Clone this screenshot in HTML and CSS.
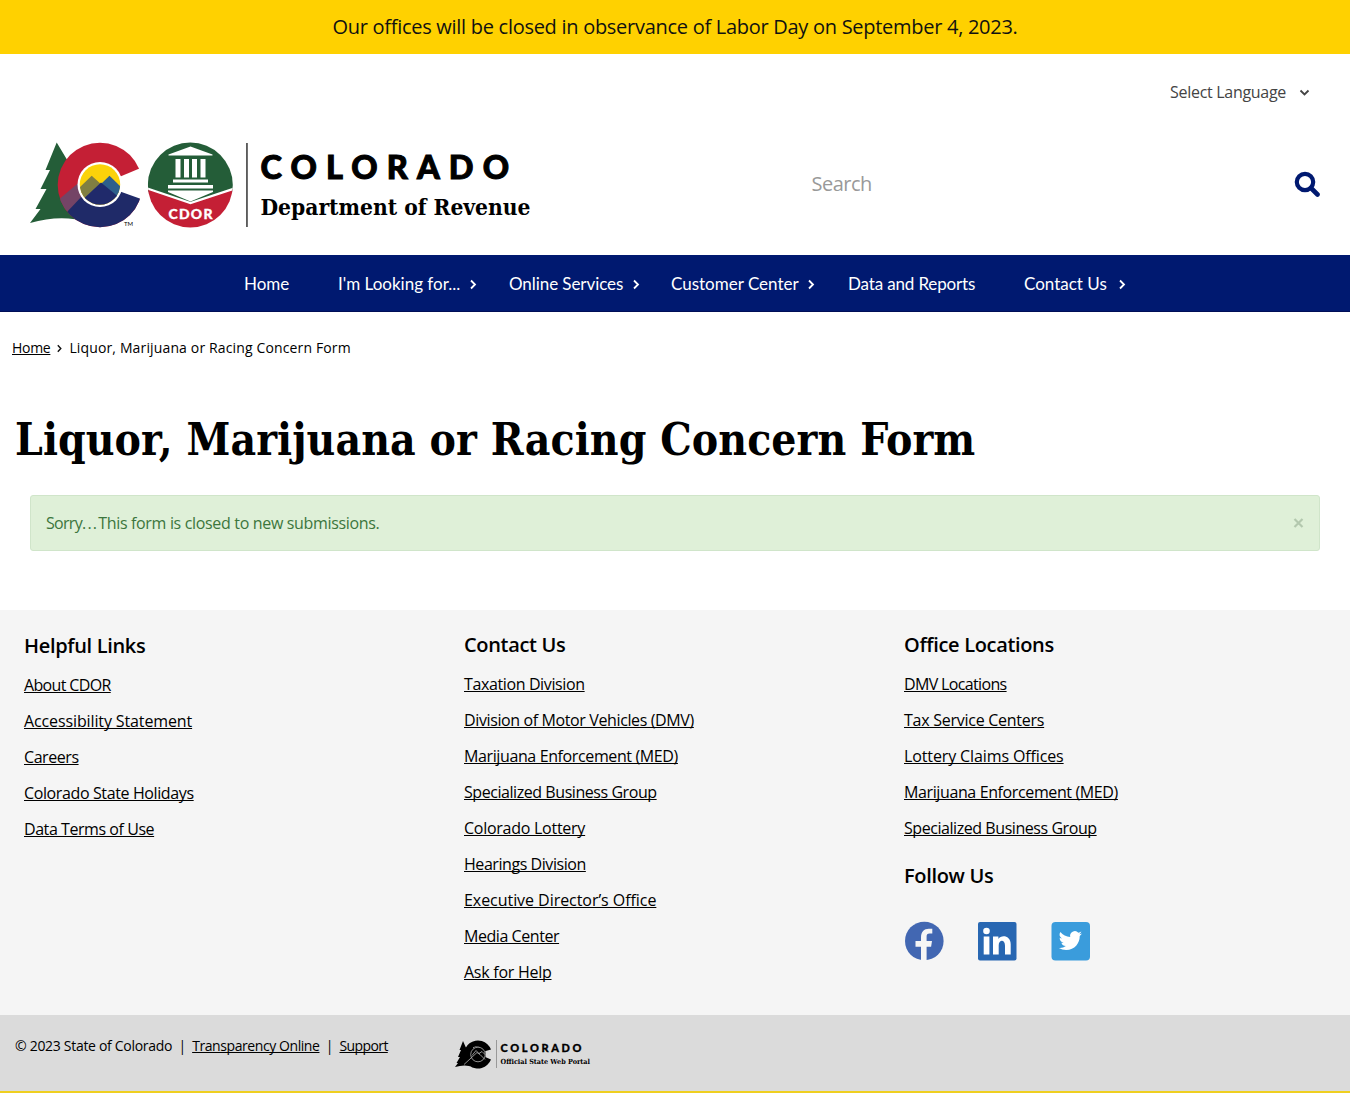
FILE: index.html
```html
<!DOCTYPE html>
<html lang="en">
<head>
<meta charset="utf-8">
<title>Liquor, Marijuana or Racing Concern Form | Department of Revenue</title>
<link rel="stylesheet" href="styles.css">
</head>
<body>
<div class="notice">Our offices will be closed in observance of Labor Day on September 4, 2023.</div>
<header class="header">
  <div class="language"><span>Select Language</span>
    <svg class="caret" width="11" height="8" viewBox="0 0 11 8"><path d="M1.5 1.5 5.5 5.5 9.5 1.5" fill="none" stroke="#444" stroke-width="1.8"/></svg>
  </div>
  <div class="brand-row">
    <svg class="logo" width="502" height="86" viewBox="0 0 502 86" role="img" aria-label="Colorado Department of Revenue">
      <defs><clipPath id="disc"><circle cx="70" cy="43" r="42.300"/></clipPath><clipPath id="sun"><circle cx="70" cy="42.500" r="20.200"/></clipPath><clipPath id="seal"><circle cx="160.300" cy="43" r="42.500"/></clipPath></defs>
      <path fill="#245d38" d="M26.700.5 15.500 28h4.500L10.500 47h6L5.500 67h5L0 81Q31 72 58 80L50 20 42 26Z"/>
      <g clip-path="url(#disc)">
        <path fill="#c41f35" d="M25 0h90v90H25z"/>
        <path fill="#744466" d="M27 59 48.300 41 56 50 40 72Z"/>
        <path fill="#1f2a68" d="M37 70 54 52 91 48l30 12v30H30Z"/>
      </g>
      <path fill="#fff" d="m88 35.500 28-11.800v35L88 48.700Z"/>
      <circle cx="70" cy="42.500" r="22.500" fill="#fff"/>
      <g clip-path="url(#sun)">
        <path fill="#fbd20a" d="M45 20h50v45H45z"/>
        <path fill="#807f42" d="M44 51 61.700 33.700 72 43 54 64Z"/>
        <path fill="#2e5f8b" d="M71 42 79.500 33.700 98 52v15Z"/>
        <path fill="#202a6b" d="M48 62 71 40.500 96 61v9H48Z"/>
      </g>
      <text x="94" y="84" class="logo-tm" textLength="9">TM</text>
      <g clip-path="url(#seal)"><path fill="#245d38" d="M117 0h87v50l-43 13-43-13Z"/><path fill="#c41f35" d="m116 46 44.500 15L206 46v41h-90Z"/><path d="m116 46 44.500 15L206 46" fill="none" stroke="#fff" stroke-width="2.200"/></g>
      <path fill="#fff" d="m160.500 4.500 22 8v1h-44v-1ZM145.500 17h5v18.500h-5zM154 17h5v18.500h-5zM162 17h5v18.500h-5zM170.500 17h5v18.500h-5zM143 37.500h35v3h-35zM138 43h45v3.500h-45zM138 48.500h45v1.500l-22.500 9.500L138 50Z"/>
      <text x="138.500" y="76.700" class="logo-seal" textLength="44">CDOR</text>
      <path fill="#333" d="M216.200 1h1.500v84h-1.500z"/>
      <text x="230.500" y="37.300" class="logo-state" textLength="248.500">COLORADO</text>
      <text x="230.500" y="73" class="logo-dept" textLength="270" lengthAdjust="spacingAndGlyphs">Department of Revenue</text>
    </svg>
    <form class="search">
      <input class="search-input" type="text" placeholder="Search" aria-label="Search">
      <svg class="search-icon" width="26" height="26" viewBox="0 0 26 26"><circle cx="11" cy="11" r="8.200" fill="none" stroke="#001970" stroke-width="4.200"/><path d="m17 17 6.500 6.500" stroke="#001970" stroke-width="4.600" stroke-linecap="round"/></svg>
    </form>
  </div>
</header>
<nav class="nav">
  <a class="nav-item">Home</a>
  <a class="nav-item looking">I'm Looking for...<svg class="chev" viewBox="0 0 7 11"><path d="m1 1.500 4 4-4 4"/></svg></a>
  <a class="nav-item online">Online Services<svg class="chev" viewBox="0 0 7 11"><path d="m1 1.500 4 4-4 4"/></svg></a>
  <a class="nav-item customer">Customer Center<svg class="chev" viewBox="0 0 7 11"><path d="m1 1.500 4 4-4 4"/></svg></a>
  <a class="nav-item reports">Data and Reports</a>
  <a class="nav-item contact">Contact Us<svg class="chev" viewBox="0 0 7 11"><path d="m1 1.500 4 4-4 4"/></svg></a>
</nav>
<main class="main">
  <div class="crumbs"><a class="link">Home</a><svg width="5" height="9" viewBox="0 0 5 9"><path d="m.8 1.200 3 3.300-3 3.300" fill="none" stroke="#111" stroke-width="1.400"/></svg><span class="crumb-current">Liquor, Marijuana or Racing Concern Form</span></div>
  <h1 class="title">Liquor, Marijuana or Racing Concern Form</h1>
  <div class="alert"><span><span class="sorry">Sorry<span class="dots">...</span></span>This form is closed to new submissions.</span><svg width="11" height="11" viewBox="0 0 11 11"><path d="m1.500 1 8 8m0-8-8 8" stroke="#b3c8ae" stroke-width="2.200"/></svg></div>
</main>
<footer>
  <div class="footer">
    <section class="col first">
      <h2 class="heading">Helpful Links</h2>
      <a class="link tight">About CDOR</a><a class="link snug">Accessibility Statement</a><a class="link firm">Careers</a><a class="link">Colorado State Holidays</a><a class="link firm">Data Terms of Use</a>
    </section>
    <section class="col">
      <h2 class="heading">Contact Us</h2>
      <a class="link">Taxation Division</a><a class="link">Division of Motor Vehicles (DMV)</a><a class="link">Marijuana Enforcement (MED)</a><a class="link firm">Specialized Business Group</a><a class="link easy">Colorado Lottery</a><a class="link firm">Hearings Division</a><a class="link loose">Executive Director’s Office</a><a class="link firm">Media Center</a><a class="link easy">Ask for Help</a>
    </section>
    <section class="col">
      <h2 class="heading">Office Locations</h2>
      <a class="link tight">DMV Locations</a><a class="link easy">Tax Service Centers</a><a class="link snug">Lottery Claims Offices</a><a class="link">Marijuana Enforcement (MED)</a><a class="link firm">Specialized Business Group</a>
      <h2 class="heading follow">Follow Us</h2>
      <div class="social">
        <svg width="40" height="40" viewBox="0 0 40 40"><circle cx="20.300" cy="20" r="19.300" fill="#4267b2"/><path fill="#f5f5f5" d="M17 40V25.700h-5.500V20H17v-3.500c0-6 3-8.800 7.800-8.800h3.500v4.900h-2.800c-2.200 0-2.900 1.200-2.900 3V20h5.400l-.9 5.700h-4.500V40Z"/></svg>
        <svg width="40" height="40" viewBox="0 0 40 40"><rect x="1" y="1" width="38.500" height="38.500" rx="2" fill="#2867b2"/><circle cx="9.500" cy="10" r="3.300" fill="#fff"/><path fill="#fff" d="M6.700 15.500h5.700v18H6.700zM16 15.500h5.400v2.400c2.500-4.500 12.300-4 12.300 5.300v10.300H28v-8.800c0-6.800-6.300-6-6.300-.5v9.300H16Z"/></svg>
        <svg width="40" height="40" viewBox="0 0 40 40"><rect x="1.500" y="1" width="38.500" height="38.500" rx="4" fill="#3a9cdc"/><path transform="translate(8.800 8) scale(.97)" fill="#fff" d="M23.953 4.570a10 10 0 0 1-2.825.775 4.958 4.958 0 0 0 2.163-2.723 10 10 0 0 1-3.127 1.184 4.920 4.920 0 0 0-8.384 4.482C7.690 8.095 4.067 6.130 1.640 3.162a4.930 4.930 0 0 0 1.523 6.574 4.900 4.900 0 0 1-2.229-.616v.061a4.923 4.923 0 0 0 3.946 4.827 5 5 0 0 1-2.212.085 4.936 4.936 0 0 0 4.604 3.417A9.870 9.870 0 0 1 0 19.540a14 14 0 0 0 7.557 2.209c9.053 0 13.998-7.496 13.998-13.985v-.64a9.900 9.900 0 0 0 2.398-2.554Z"/></svg>
      </div>
    </section>
  </div>
  <div class="bottom">
    <div class="legal"><span>© 2023 State of Colorado</span><span>|</span><a class="link">Transparency Online</a><span>|</span><a class="link tight">Support</a></div>
    <svg class="portal" width="136" height="30" viewBox="0 0 136 30">
      <path d="M8 1 4.500 10H6L3 17h2L1.500 23H3L0 27q10-3 18 0V5L12 10ZM36 9.500A14 14 0 1 0 36 19.500l-7-3a7.500 7.500 0 1 1 0-5Z"/>
      <circle cx="23" cy="14.500" r="8" fill="#000"/><circle cx="23" cy="14.500" r="7.300" fill="none" stroke="#ccc" stroke-width=".7"/><path d="m9 24.500 13-12 3 2 5 5M17 15.500l4-5 3 3 3-2 4 4" fill="none" stroke="#ccc" stroke-width=".7"/>
      <path fill="#888" d="M41 0h.8v28H41z"/>
      <text x="45.500" y="12" class="portal-state" textLength="81">COLORADO</text>
      <text x="45.500" y="24" class="portal-name" textLength="89.500" lengthAdjust="spacingAndGlyphs">Official State Web Portal</text>
    </svg>
  </div>
</footer>
</body>
</html>
```
FILE: styles.css
```css
* { box-sizing: border-box; }
body { margin: 0; background: #fff; color: #000; font: 16px/24px "Open Sans", sans-serif; }
.notice { height: 54px; background: #ffd100; color: #111; font-size: 20px; line-height: 54px; text-align: center; letter-spacing: -.28px; }
.header { height: 201px; padding: 26px 30px 0; }
.language { display: flex; justify-content: flex-end; align-items: center; gap: 13px; height: 24px; padding-right: 10px; color: #444; letter-spacing: -.3px; }
.caret { margin-top: 2px; }
.brand-row { display: flex; justify-content: space-between; margin-top: 38px; }
.logo { display: block; overflow: visible; }
.logo-tm { font: 6px "Lato", sans-serif; }
.logo-seal { font: 900 14px "Lato", sans-serif; fill: #fff; stroke: #fff; stroke-width: .3px; }
.logo-state { font: 900 32.5px "Lato", sans-serif; stroke: #000; stroke-width: 1px; }
.logo-dept { font: bold 22px "DejaVu Serif", serif; }
.search { display: flex; align-items: center; width: 508.5px; height: 82px; }
.search-input { flex: 1; min-width: 0; padding: 0; border: 0; outline: 0; background: none; font: 20px "Open Sans", sans-serif; letter-spacing: -.5px; }
.search-input::placeholder { color: #999; }
.search-icon { margin-top: 1px; }
.nav { display: grid; grid-template-columns: 94px 171px 162px 177px 176px 130px; justify-content: center; height: 57px; background: #001970; border-bottom: 1px solid #000e57; }
.nav-item { display: flex; align-items: center; padding-left: 24px; color: #fff; font: 17px "Lato", sans-serif; white-space: nowrap; }
.online { letter-spacing: -.07px; }
.reports { letter-spacing: -.15px; }
.chev { width: 7px; height: 11px; margin: 2px 8px 0 auto; fill: none; stroke: #fff; stroke-width: 1.8; flex: none; }
.online .chev { margin-right: 7px; }
.customer .chev { margin-right: 9px; }
.contact .chev { margin-right: 4px; }
.main { height: 298px; padding: 24px 30px 0 12px; }
.crumbs { display: flex; align-items: center; gap: 7px; height: 24px; font-size: 14px; }
.crumbs .link { letter-spacing: -.3px; }
.crumb-current { letter-spacing: .14px; }
.link { color: inherit; text-decoration: underline; text-underline-offset: 1px; text-decoration-thickness: 1px; text-decoration-skip-ink: none; }
.title { margin: 50px 0 0 3px; font: bold 44px/60px "DejaVu Serif", serif; font-stretch: condensed; letter-spacing: .07px; white-space: nowrap; color: #000; }
.alert { display: flex; align-items: center; justify-content: space-between; height: 56px; margin: 25px 0 0 18px; padding: 0 15px; border: 1px solid #d0e5ca; border-radius: 3px; background: #dff0d8; color: #3c763d; letter-spacing: -.33px; }
.sorry { letter-spacing: -.7px; }
.dots { letter-spacing: 1.2px; }
.footer { display: grid; grid-template-columns: 440px 440px 1fr; height: 405px; padding: 20px 24px 0; background: #f5f5f5; }
.footer .link { letter-spacing: -.38px; }
.footer .loose { letter-spacing: -.05px; }
.footer .snug { letter-spacing: -.12px; }
.footer .easy { letter-spacing: -.26px; }
.footer .firm { letter-spacing: -.44px; }
.footer .tight { letter-spacing: -.65px; }
.col { display: flex; flex-direction: column; align-items: flex-start; gap: 12px; }
.first { padding-top: 1px; }
.heading { margin: 0 0 3px; font-size: 20px; line-height: 30px; height: 27px; font-weight: 600; letter-spacing: -.33px; }
.follow { margin-top: 9px; }
.social { display: flex; gap: 33px; margin-top: 18px; }
.bottom { display: flex; height: 78px; padding: 19px 15px 0; background: #dbdbdb; border-bottom: 2px solid #efcf20; font-size: 14px; }
.legal { display: flex; gap: 6.3px; width: 440px; letter-spacing: -.3px; }
.legal .link { letter-spacing: -.42px; }
.legal .tight { letter-spacing: -.6px; }
.portal { margin-top: 6px; overflow: visible; }
.portal-state { font: 900 11px "Lato", sans-serif; stroke: #000; stroke-width: .3px; }
.portal-name { font: bold 7px "DejaVu Serif", serif; }
```
